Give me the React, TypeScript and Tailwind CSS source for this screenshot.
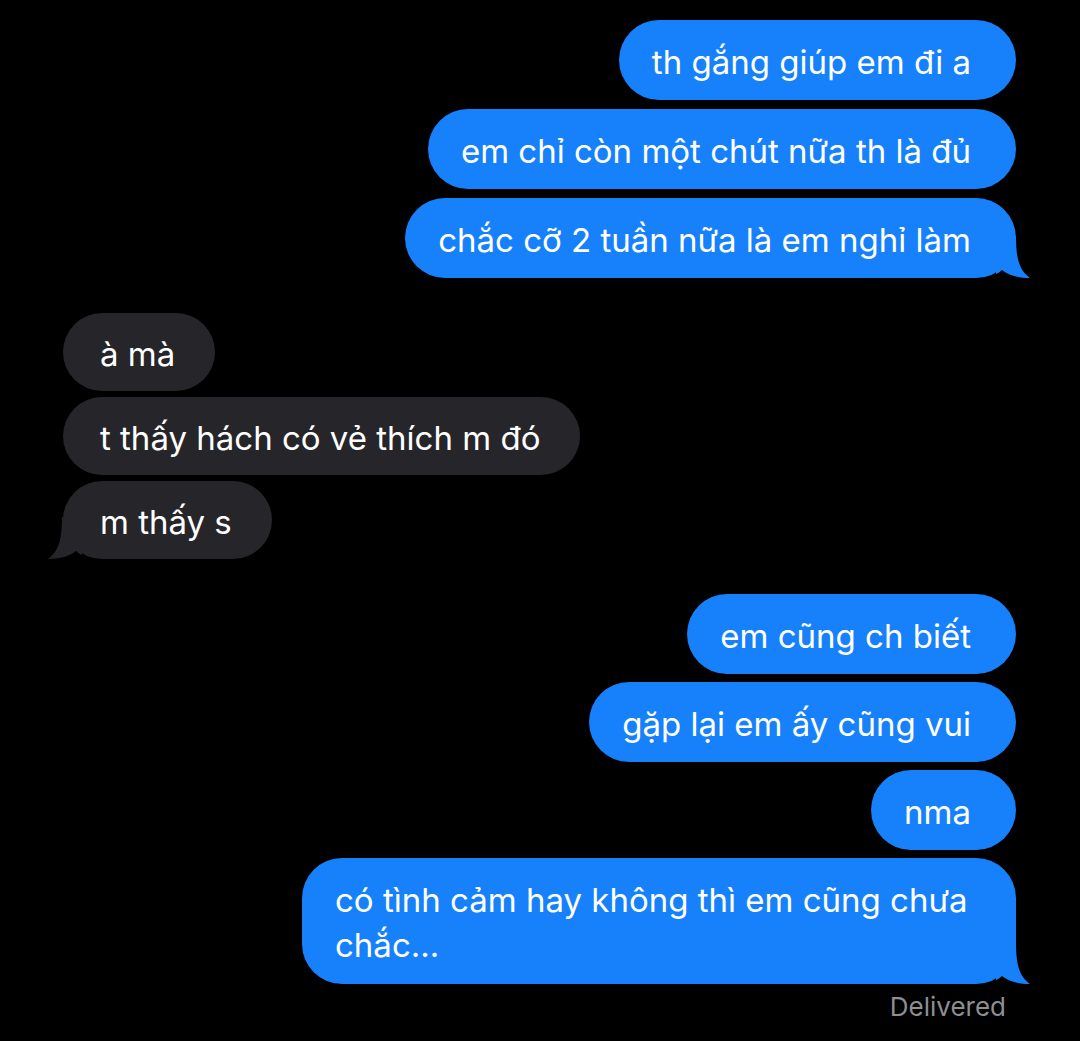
import React from 'react';

type Msg = { text: string; tail?: boolean };

const sent1: Msg[] = [
  { text: 'th gắng giúp em đi a' },
  { text: 'em chỉ còn một chút nữa th là đủ' },
  { text: 'chắc cỡ 2 tuần nữa là em nghỉ làm', tail: true },
];

const received: Msg[] = [
  { text: 'à mà' },
  { text: 't thấy hách có vẻ thích m đó' },
  { text: 'm thấy s', tail: true },
];

const sent2: Msg[] = [
  { text: 'em cũng ch biết' },
  { text: 'gặp lại em ấy cũng vui' },
  { text: 'nma' },
];

function Tail({ side, color }: { side: 'left' | 'right'; color: string }) {
  if (side === 'right') {
    return (
      <svg
        className="absolute bottom-0 right-[-14px]"
        width="34"
        height="42"
        viewBox="0 0 34 42"
      >
        <path d="M0 0 H20 C20 22 23 34 34 42 C22 42 12 39 6 34 C4 36 2 37 0 38 Z" fill={color} />
      </svg>
    );
  }
  return (
    <svg
      className="absolute bottom-0 left-[-15px]"
      width="34"
      height="42"
      viewBox="0 0 34 42"
    >
      <path d="M34 0 H14 C14 22 11 34 0 42 C12 42 22 39 28 34 C30 36 32 37 34 38 Z" fill={color} />
    </svg>
  );
}

function Sent({ m }: { m: Msg }) {
  return (
    <div className="relative self-end rounded-[40px] bg-[#1681fa] pl-[33px] pr-[45px] pt-[19px] pb-[15px] text-[33px] leading-[46px] text-white">
      <span className="relative z-10">{m.text}</span>
      {m.tail && <Tail side="right" color="#1681fa" />}
    </div>
  );
}

function Received({ m }: { m: Msg }) {
  return (
    <div className="relative self-start rounded-[39px] bg-[#262529] pl-[37px] pr-[40px] pt-[18px] pb-[14px] text-[33px] leading-[46px] text-white">
      <span className="relative z-10">{m.text}</span>
      {m.tail && <Tail side="left" color="#262529" />}
    </div>
  );
}

export default function App() {
  return (
    <div
      className="h-[1041px] w-[1080px] overflow-hidden bg-black pt-[20px] pl-[63px] pr-[64px]"
      style={{ fontFamily: 'Inter, "Noto Sans", sans-serif' }}
    >
      <div className="flex flex-col gap-[9px]">
        {sent1.map((m, i) => (
          <Sent key={i} m={m} />
        ))}
      </div>
      <div className="mt-[35px] flex flex-col gap-[6px]">
        {received.map((m, i) => (
          <Received key={i} m={m} />
        ))}
      </div>
      <div className="mt-[35px] flex flex-col gap-[8px]">
        {sent2.map((m, i) => (
          <Sent key={i} m={m} />
        ))}
        <div className="relative self-end w-[714px] rounded-[40px] bg-[#1681fa] pl-[33px] pr-[40px] pt-[20px] pb-[16px] text-[33px] leading-[45px] text-white">
          <span className="relative z-10">
            có tình cảm hay không thì em cũng chưa
            <br />
            chắc...
          </span>
          <Tail side="right" color="#1681fa" />
        </div>
      </div>
      <div className="mt-[7px] pr-[10px] text-right text-[26px] leading-[32px] text-[#8e8e93]">
        Delivered
      </div>
    </div>
  );
}
